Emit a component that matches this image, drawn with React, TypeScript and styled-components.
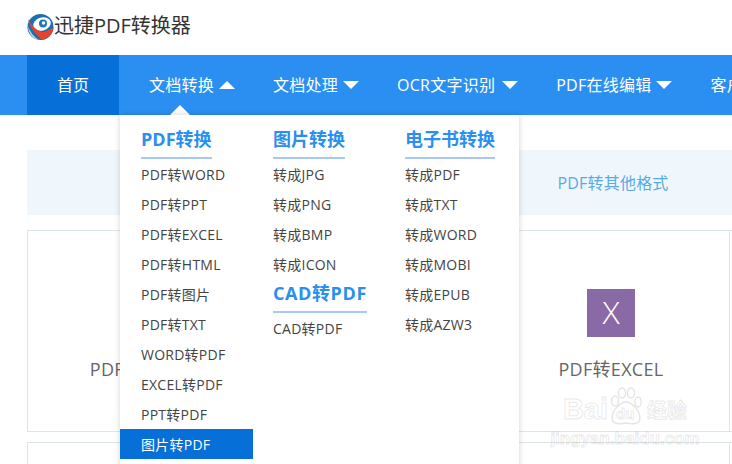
import React from "react";
import styled, { createGlobalStyle } from "styled-components";

const FONT = `"Open Sans", "Noto Sans CJK SC", "Liberation Sans", sans-serif`;

const Global = createGlobalStyle`
  html, body { margin: 0; padding: 0; background: #fff; overflow: hidden; }
  body { width: 732px; height: 464px; font-family: ${FONT}; }
  * { box-sizing: border-box; }
`;

const Page = styled.div`
  position: relative;
  width: 732px;
  height: 464px;
  overflow: hidden;
`;

const Header = styled.header`
  height: 55px;
  padding: 14px 0 0 27px;
  display: flex;
  align-items: flex-start;
`;

const BrandName = styled.span`
  font-size: 20px;
  line-height: 24px;
  color: #333;
  white-space: nowrap;
`;

const Nav = styled.nav`
  position: relative;
  height: 60px;
  background: #2a8ff0;
  padding-left: 27px;
  display: flex;
  align-items: center;
  white-space: nowrap;
  overflow: hidden;
`;

const HomeLink = styled.a`
  width: 92px;
  height: 60px;
  background: #0670d8;
  color: #fff;
  font-size: 16px;
  line-height: 60px;
  text-align: center;
  margin-right: 30px;
  flex: none;
`;

const NavLink = styled.a<{ $gap?: number }>`
  display: flex;
  align-items: center;
  gap: ${(p) => p.$gap ?? 5}px;
  color: #fff;
  font-size: 16px;
  line-height: 24px;
  letter-spacing: 0.25px;
  margin-right: 38px;
  flex: none;
`;

const Caret = styled.i<{ $up?: boolean }>`
  width: 0;
  height: 0;
  border-left: 8px solid transparent;
  border-right: 8px solid transparent;
  ${(p) => (p.$up ? "border-bottom: 8px solid #fff;" : "border-top: 8px solid #fff;")}
`;

const MenuTip = styled.i`
  position: absolute;
  left: 170px;
  bottom: 0;
  width: 0;
  height: 0;
  border-left: 10px solid transparent;
  border-right: 10px solid transparent;
  border-bottom: 10px solid #fff;
`;

const Dropdown = styled.div`
  position: absolute;
  z-index: 2;
  left: 120px;
  top: 115px;
  width: 399px;
  height: 360px;
  background: #fff;
  box-shadow: 0 0 6px rgba(0, 0, 0, 0.18);
  display: grid;
  grid-template-columns: 133px 132px 134px;
`;

const MenuColumn = styled.div`
  padding-top: 10px;
  display: flex;
  flex-direction: column;
  align-items: stretch;
`;

const MenuHeading = styled.h4<{ $inset: number; $track?: number }>`
  align-self: flex-start;
  margin: 0 0 0 ${(p) => p.$inset}px;
  height: 34px;
  font-size: 18px;
  line-height: 29px;
  font-weight: 700;
  letter-spacing: ${(p) => p.$track ?? 0}px;
  color: #2a8ff0;
  border-bottom: 2px solid #a5c8f8;
  white-space: nowrap;
`;

const MenuItem = styled.a<{ $inset: number; $active?: boolean }>`
  display: block;
  height: 30px;
  line-height: 32px;
  padding-left: ${(p) => p.$inset}px;
  font-size: 14px;
  letter-spacing: 0.25px;
  white-space: nowrap;
  color: ${(p) => (p.$active ? "#fff" : "#444")};
  background: ${(p) => (p.$active ? "#0670d8" : "transparent")};
`;

const TabBand = styled.div`
  margin: 35px 0 0 27px;
  height: 65px;
  background: #eff7fd;
  display: grid;
  grid-template-columns: 234px 234px 236px;
  align-items: center;
`;

const Tab = styled.span`
  grid-column: 3;
  text-align: center;
  font-size: 16px;
  line-height: 24px;
  letter-spacing: 0.2px;
  color: #5aa9e6;
`;

const CardGrid = styled.div`
  margin: 15px 0 0 27px;
  display: grid;
  grid-template-columns: 233px 232px 237px 234px;
  grid-auto-rows: 202px;
  row-gap: 10px;
`;

const Card = styled.div`
  border: 1px solid #dce5e9;
  margin-right: -1px;
  display: flex;
  flex-direction: column;
  align-items: center;
  padding-top: 58px;
`;

const FileBadge = styled.div<{ $color: string }>`
  width: 48px;
  height: 48px;
  background: ${(p) => p.$color};
  color: #fff;
  font-size: 32px;
  font-weight: 300;
  line-height: 46px;
  text-align: center;
`;

const CardTitle = styled.div`
  margin-top: 18px;
  font-size: 18px;
  line-height: 28px;
  letter-spacing: 0.3px;
  color: #666;
  white-space: nowrap;
`;

const Watermark = styled.div`
  position: absolute;
  z-index: 3;
  left: 560px;
  top: 385px;
  width: 130px;
  display: flex;
  flex-direction: column;
  align-items: center;
  pointer-events: none;
  color: transparent;
  font-family: "Liberation Sans", sans-serif;
  font-weight: 700;
  -webkit-text-stroke: 1px rgba(120, 120, 120, 0.17);
`;

const WatermarkMain = styled.div`
  display: flex;
  align-items: flex-end;
  height: 40px;
  font-size: 29px;
  line-height: 32px;
  white-space: nowrap;
`;

const WatermarkPaw = styled.div`
  position: relative;
  width: 32px;
  height: 38px;
  margin: 0 5px 0 2px;
`;

const WatermarkDu = styled.span`
  position: absolute;
  left: 6px;
  bottom: 2px;
  font-size: 15px;
  line-height: 18px;
`;

const WatermarkCn = styled.span`
  font-family: "Noto Sans CJK SC", sans-serif;
  font-size: 20px;
  line-height: 30px;
`;

const WatermarkUrl = styled.div`
  margin-top: 5px;
  font-size: 17px;
  line-height: 18px;
  white-space: nowrap;
`;

const Logo = () => (
  <svg width="27" height="27" viewBox="0 0 27 27" style={{ flex: "none" }}>
    <circle cx="13.5" cy="13" r="13" fill="#1c6fb0" />
    <ellipse cx="15" cy="10" rx="9" ry="6.5" fill="#fff" transform="rotate(-18 15 10)" />
    <circle cx="16" cy="9.5" r="4" fill="#1c78bc" />
    <circle cx="16.5" cy="9" r="1.7" fill="#fff" />
    <path d="M1 5 C5 12 11 18 17 18 L26.5 14 C25.5 21 20 25 15.5 26 C9 21 3 14 1 5Z" fill="#e2452c" />
    <path d="M1 12 C3 18 7 23 12 26 C6 25.5 1.5 20 1 12Z" fill="#b9d3e8" />
  </svg>
);

const PawOutline = () => (
  <svg width="32" height="38" viewBox="0 0 32 38" fill="none" stroke="rgba(120,120,120,0.2)" strokeWidth="1.4">
    <ellipse cx="5" cy="14" rx="3.5" ry="5" />
    <ellipse cx="12" cy="6" rx="3.5" ry="5" />
    <ellipse cx="21" cy="6" rx="3.5" ry="5" />
    <ellipse cx="28" cy="15" rx="3.2" ry="5" />
    <path d="M16 15 C10 15 2 24 2 31 C2 38 11 37 16 36 C21 37 30 38 30 31 C30 24 22 15 16 15Z" />
  </svg>
);

const pdfItems = ["PDF转WORD", "PDF转PPT", "PDF转EXCEL", "PDF转HTML", "PDF转图片", "PDF转TXT", "WORD转PDF", "EXCEL转PDF", "PPT转PDF"];
const imageItems = ["转成JPG", "转成PNG", "转成BMP", "转成ICON"];
const ebookItems = ["转成PDF", "转成TXT", "转成WORD", "转成MOBI", "转成EPUB", "转成AZW3"];

export default function App() {
  return (
    <Page>
      <Global />
      <Header>
        <Logo />
        <BrandName>迅捷PDF转换器</BrandName>
      </Header>
      <Nav>
        <HomeLink>首页</HomeLink>
        <NavLink>文档转换<Caret $up /></NavLink>
        <NavLink>文档处理<Caret /></NavLink>
        <NavLink $gap={7}>OCR文字识别<Caret /></NavLink>
        <NavLink>PDF在线编辑<Caret /></NavLink>
        <NavLink>客户端</NavLink>
        <MenuTip />
      </Nav>
      <Dropdown>
        <MenuColumn>
          <MenuHeading $inset={21}>PDF转换</MenuHeading>
          {pdfItems.map((t) => <MenuItem key={t} $inset={21}>{t}</MenuItem>)}
          <MenuItem $inset={21} $active>图片转PDF</MenuItem>
        </MenuColumn>
        <MenuColumn>
          <MenuHeading $inset={20}>图片转换</MenuHeading>
          {imageItems.map((t) => <MenuItem key={t} $inset={20}>{t}</MenuItem>)}
          <MenuHeading $inset={20} $track={0.6}>CAD转PDF</MenuHeading>
          <MenuItem $inset={20}>CAD转PDF</MenuItem>
        </MenuColumn>
        <MenuColumn>
          <MenuHeading $inset={20}>电子书转换</MenuHeading>
          {ebookItems.map((t) => <MenuItem key={t} $inset={20}>{t}</MenuItem>)}
        </MenuColumn>
      </Dropdown>
      <TabBand>
        <Tab>PDF转其他格式</Tab>
      </TabBand>
      <CardGrid>
        <Card><FileBadge $color="#2b7cd3">W</FileBadge><CardTitle>PDF转WORD</CardTitle></Card>
        <Card><FileBadge $color="#d9582b">P</FileBadge><CardTitle>PDF转PPT</CardTitle></Card>
        <Card><FileBadge $color="#8a6aa6">X</FileBadge><CardTitle>PDF转EXCEL</CardTitle></Card>
        <Card />
        <Card /><Card /><Card /><Card />
      </CardGrid>
      <Watermark>
        <WatermarkMain>
          Bai
          <WatermarkPaw>
            <PawOutline />
            <WatermarkDu>du</WatermarkDu>
          </WatermarkPaw>
          <WatermarkCn>经验</WatermarkCn>
        </WatermarkMain>
        <WatermarkUrl>jingyan.baidu.com</WatermarkUrl>
      </Watermark>
    </Page>
  );
}
